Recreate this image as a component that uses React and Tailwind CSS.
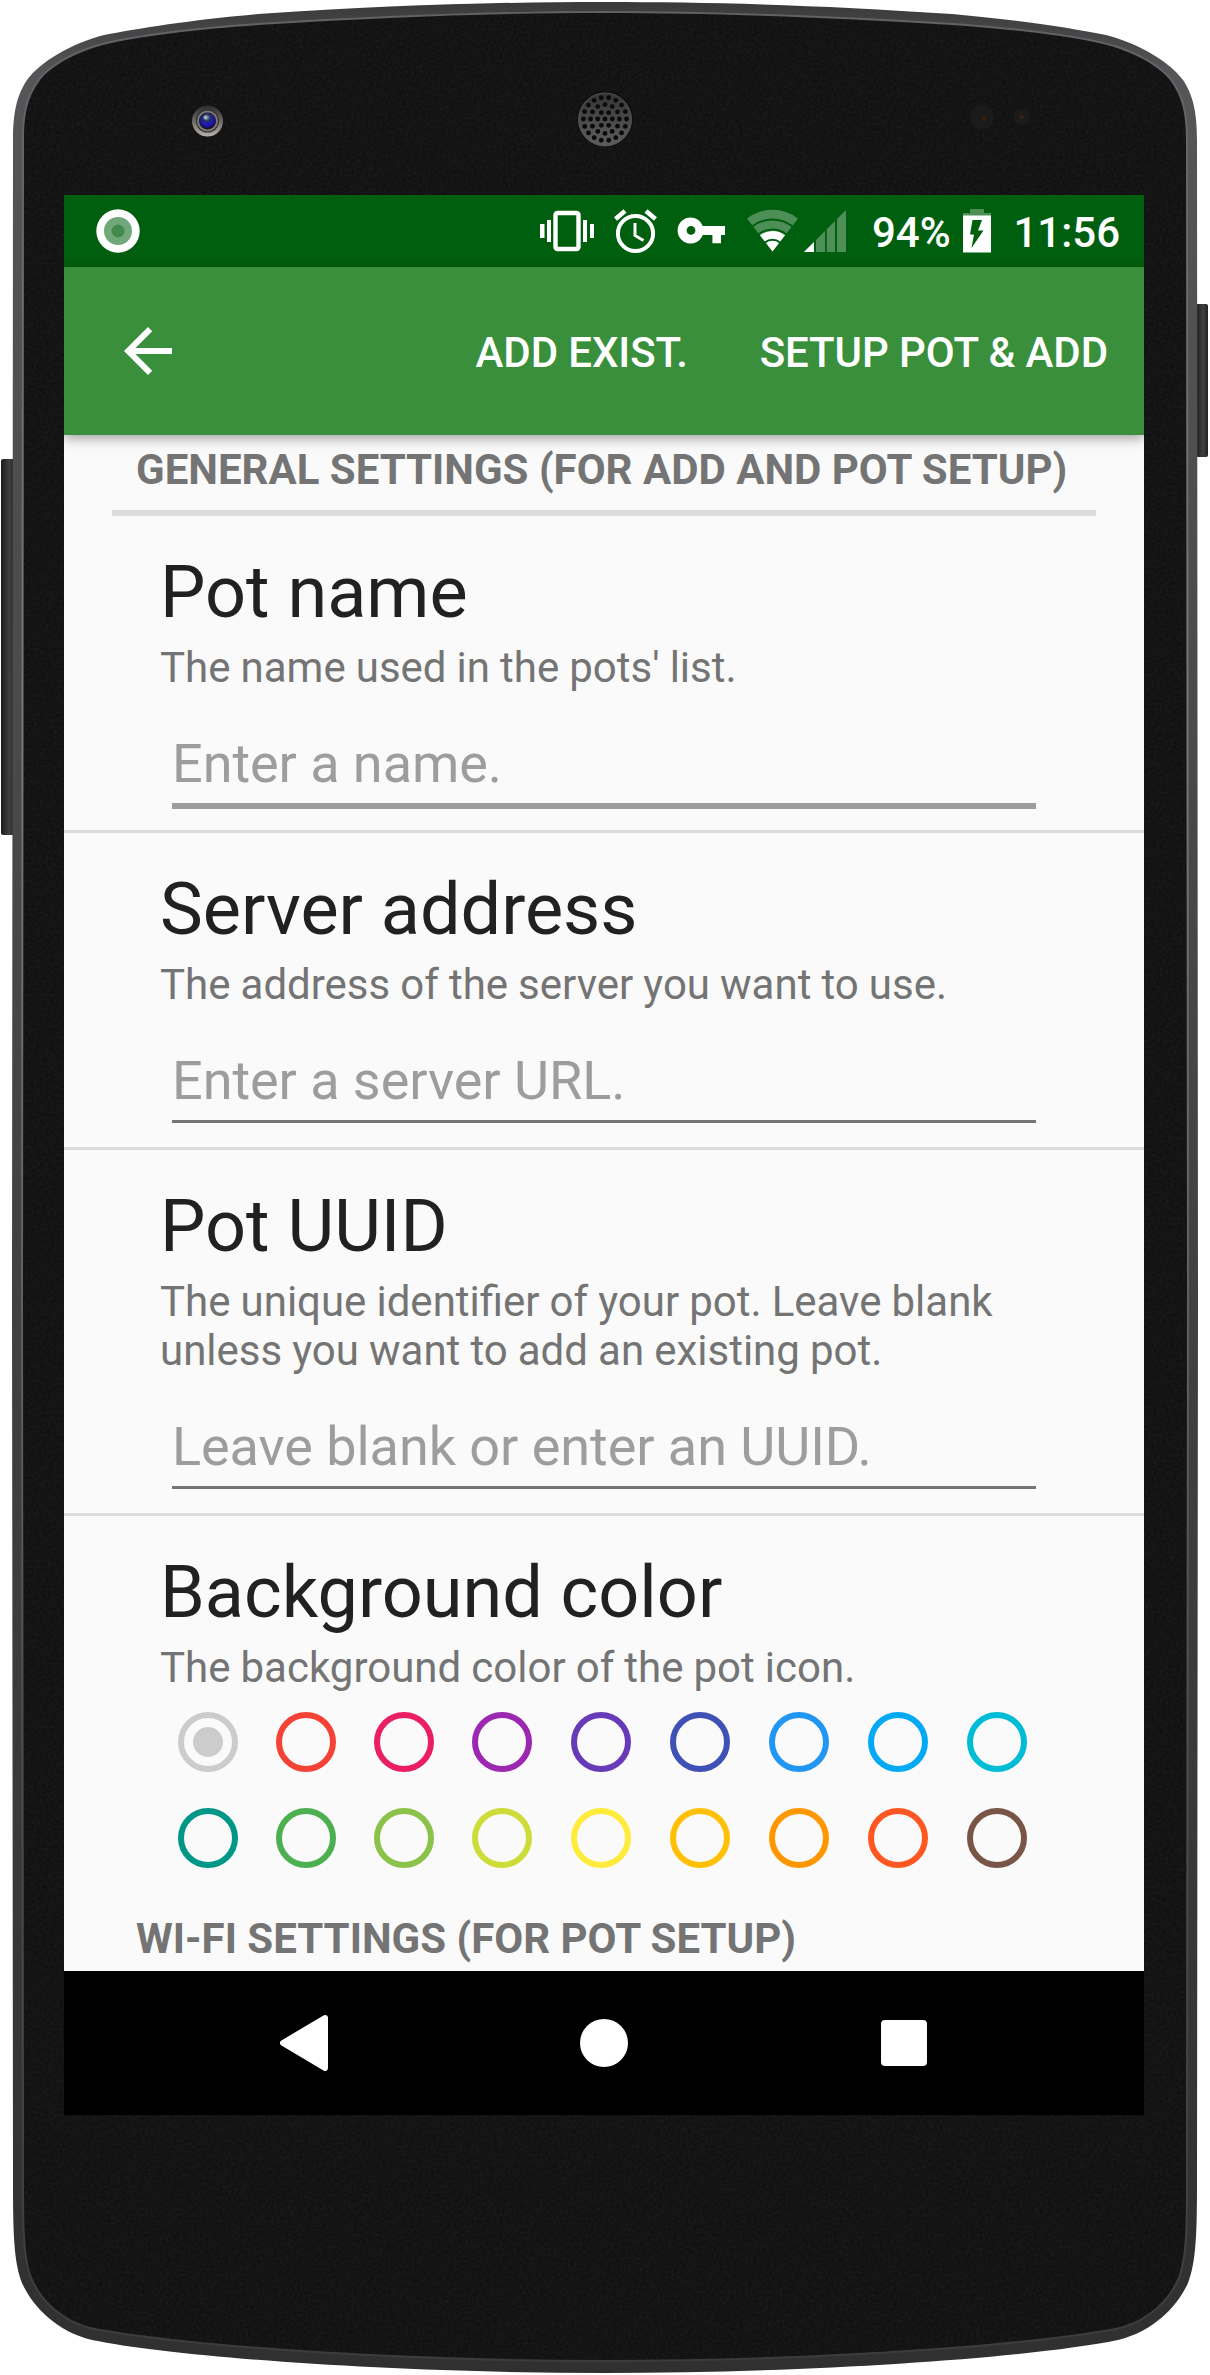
import React from "react";

const OUTER =
  "M605 2 C500 2 390 5 258 14 C190 20 140 28 104 35 C70 44 40 62 27 80 C17 95 13 112 13 140 L12 1300 L13 2180 C13 2235 14 2262 22 2283 C32 2305 55 2331 92 2340 C180 2358 400 2373 605 2373 C810 2373 1030 2358 1118 2340 C1155 2331 1178 2305 1188 2283 C1196 2262 1197 2235 1197 2180 L1198 1300 L1197 140 C1197 112 1193 95 1183 80 C1170 62 1140 44 1106 35 C1070 28 1020 20 952 14 C820 5 710 2 605 2 Z";
const INNER =
  "M605 13 C500 13 390 17 258 25 C200 29 150 35 116 42 C80 49 52 65 40 80 C28 97 24 112 24 140 L23 1300 L24 2180 C24 2235 25 2255 31 2275 C39 2296 58 2318 90 2327 C180 2345 400 2360 605 2360 C810 2360 1030 2345 1120 2327 C1152 2318 1171 2296 1179 2275 C1185 2255 1186 2235 1186 2180 L1187 1300 L1186 140 C1186 112 1182 97 1170 80 C1158 65 1130 49 1094 42 C1060 35 1010 29 952 25 C820 17 710 13 605 13 Z";

const SPEAKER_HOLES = [
  { r: 0, n: 1 },
  { r: 7.3, n: 6 },
  { r: 14.4, n: 12 },
  { r: 21.6, n: 18 },
].flatMap(({ r, n }) =>
  Array.from({ length: n }, (_, i) => {
    const a = (i / n) * Math.PI * 2;
    return [605 + r * Math.cos(a), 119 + r * Math.sin(a)];
  })
);

function PhoneFrame() {
  return (
    <svg
      className="absolute inset-0 h-[2375px] w-[1210px]"
      viewBox="0 0 1210 2375"
      aria-hidden="true"
    >
      <defs>
        <linearGradient id="rim" x1="0" y1="0" x2="0" y2="1">
          <stop offset="0" stopColor="#3a3a3b" />
          <stop offset="0.03" stopColor="#565658" />
          <stop offset="0.25" stopColor="#4c4c4e" />
          <stop offset="0.7" stopColor="#3b3b3c" />
          <stop offset="1" stopColor="#303030" />
        </linearGradient>
        <linearGradient id="edge" x1="0" y1="0" x2="0" y2="1">
          <stop offset="0" stopColor="#626266" />
          <stop offset="0.3" stopColor="#77777c" />
          <stop offset="0.7" stopColor="#525254" />
          <stop offset="1" stopColor="#3c3c3d" />
        </linearGradient>
        <linearGradient id="key" x1="0" y1="0" x2="1" y2="0">
          <stop offset="0" stopColor="#1c1c1c" />
          <stop offset="0.6" stopColor="#404040" />
          <stop offset="1" stopColor="#202020" />
        </linearGradient>
        <linearGradient id="lensRing" x1="0" y1="0" x2="0" y2="1">
          <stop offset="0" stopColor="#2c2c2c" />
          <stop offset="0.5" stopColor="#6a6866" />
          <stop offset="1" stopColor="#b5b2b0" />
        </linearGradient>
        <radialGradient id="lens" cx="0.45" cy="0.3" r="0.7">
          <stop offset="0" stopColor="#8ea0b8" />
          <stop offset="0.35" stopColor="#27305e" />
          <stop offset="0.75" stopColor="#1a12c8" />
          <stop offset="1" stopColor="#15105a" />
        </radialGradient>
        <linearGradient id="grille" x1="0" y1="0" x2="0" y2="1">
          <stop offset="0" stopColor="#343434" />
          <stop offset="1" stopColor="#5e5e5e" />
        </linearGradient>
        <filter id="grain" x="0" y="0" width="100%" height="100%" colorInterpolationFilters="sRGB">
          <feTurbulence type="fractalNoise" baseFrequency="0.35" numOctaves="2" result="n" />
          <feColorMatrix
            in="n"
            type="matrix"
            values="0.06 0 0 0 0.05  0.06 0 0 0 0.05  0.06 0 0 0 0.05  0 0 0 0 1"
          />
          <feComposite in2="SourceGraphic" operator="in" />
        </filter>
      </defs>
      <rect x="1196" y="304" width="12" height="153" rx="2" fill="url(#key)" />
      <rect x="1" y="459" width="14" height="376" rx="2" fill="url(#key)" />
      <path d={OUTER} fill="url(#rim)" />
      <path d={INNER} fill="#141414" stroke="url(#edge)" strokeWidth="4" />
      <path d={INNER} fill="#141414" filter="url(#grain)" />

      <circle cx="207.5" cy="121" r="15.5" fill="url(#lensRing)" />
      <circle cx="207.5" cy="121" r="11.5" fill="#2a2a2a" />
      <circle cx="207.5" cy="121" r="10.5" fill="#7d7977" />
      <circle cx="207.5" cy="121" r="8.5" fill="#171717" />
      <circle cx="207.5" cy="120.5" r="7.5" fill="url(#lens)" />
      <circle cx="205.5" cy="117.5" r="2" fill="#9fb0b8" />

      <circle cx="605" cy="119" r="28" fill="#0c0c0c" />
      <circle cx="605" cy="119.5" r="26.5" fill="url(#grille)" stroke="#555" strokeWidth="1" />
      {SPEAKER_HOLES.map(([x, y], i) => (
        <circle key={i} cx={x} cy={y} r="2.4" fill="#0a0a0a" />
      ))}

      <circle cx="982" cy="117" r="12" fill="#1c1b1b" />
      <circle cx="984" cy="119" r="2.2" fill="#3a2115" />
      <circle cx="1021.5" cy="117" r="8" fill="#1c1b1b" />
      <circle cx="1021.5" cy="117" r="2.2" fill="#3a2115" />
    </svg>
  );
}

function StatusBar() {
  return (
    <div className="flex h-[72px] items-center bg-[#005f0e] pl-8 pr-6 text-[42px] font-medium leading-[72px] text-white">
      <svg className="size-[44px]" viewBox="0 0 44 44">
        <circle cx="22" cy="22" r="21.7" fill="#fff" />
        <circle cx="22" cy="22" r="14" fill="#71a87a" />
        <circle cx="22" cy="22" r="6.5" fill="#42894c" />
      </svg>
      <svg className="ml-[400px] h-[72px] w-[316px]" viewBox="540 195 316 72" fill="#fff">
        <rect x="555.5" y="213" width="23" height="36" rx="2" fill="none" stroke="#fff" strokeWidth="4.4" />
        <path d="M540 224h4.500v14h-4.500zM547 220h4v22h-4zM583 220h4v22h-4zM590 224h4v14h-4z" />
        <g fill="none" stroke="#fff">
          <circle cx="635.500" cy="233.500" r="17.600" strokeWidth="4" />
          <path d="M635 223v12.500l8.500 5" strokeWidth="3" />
          <path d="M615.500 219l9.500-8M655.500 219l-9.500-8" strokeWidth="4.600" />
        </g>
        <path
          fillRule="evenodd"
          d="M690.500 217.500a13 13 0 0 1 12.300 8.500H725v9h-4v8.300h-8.600V235h-9.600a13 13 0 1 1-12.300-17.500zM691 226a4.400 4.400 0 1 0 0 8.800a4.400 4.400 0 0 0 0-8.800z"
        />
        <path d="M747 218.500a42 42 0 0 1 51 0L772.500 251.500z" fill="#4d8f57" />
        <path d="M760 235.200a20.500 20.500 0 0 1 25 0L772.500 251.500z" />
        <g fill="none" stroke="#005f0e" strokeWidth="2">
          <path d="M752.500 226.300a32.500 32.500 0 0 1 40 0" />
          <path d="M758.800 234.300a22 22 0 0 1 27.400 0" />
          <path d="M765 242.500a12 12 0 0 1 15 0" />
        </g>
        <path d="M804 252l42-42v42z" fill="#4d8f57" />
        <path d="M804 252l10-10v10z" />
        <path d="M814 205h2v50h-2zM825 205h1.800v50h-1.800zM835 205h2v50h-2z" fill="#005f0e" />
      </svg>
      <span className="ml-[16px] w-[79px] pt-[3px]">94%</span>
      <svg className="ml-[12px] h-[72px] w-[28px]" viewBox="963 195 28 72">
        <path d="M970 209h14v4h7v3h-28v-3h7z" fill="#4d8f57" />
        <path d="M963 215.500h28v37h-28z" fill="#fff" />
        <path d="M972.500 220h9.500l-4 10.500h5.500L971.500 248l2.500-13.500h-4z" fill="#005f0e" />
      </svg>
      <span className="ml-auto pt-[3px]">11:56</span>
    </div>
  );
}

function AppBar() {
  return (
    <div className="relative z-10 flex h-[168px] items-center bg-[#3a8f3d] pl-[60px] pr-9 text-[42px] font-medium tracking-[-0.1px] text-white shadow-[0_3px_12px_rgba(0,0,0,0.38)]">
      <svg className="size-12" viewBox="4 4 16 16" fill="#fff">
        <path d="M20 11H7.830l5.590-5.590L12 4l-8 8 8 8 1.410-1.410L7.830 13H20v-2z" />
      </svg>
      <span className="ml-auto pt-[2px]">ADD EXIST.</span>
      <span className="ml-[72px] pt-[2px]">SETUP POT &amp; ADD</span>
    </div>
  );
}

function Title({ children }) {
  return <h2 className="text-[72px] leading-[84px] text-[#212121]">{children}</h2>;
}

function Summary({ children }) {
  return (
    <p className="mt-2 text-[42px] leading-[49px] [word-spacing:-0.35px] text-[#747474]">{children}</p>
  );
}

function TextSetting({ title, summary, hint, focused }) {
  return (
    <section className="border-b-[3px] border-[#dcdcdc] pb-[21px] pl-24 pr-[108px] pt-[35px]">
      <Title>{title}</Title>
      <Summary>{summary}</Summary>
      <div className="ml-3 mt-10 flex h-[77px] flex-col">
        <div className="h-[71px] text-[54px] leading-[63px] tracking-[-0.05px] text-[#9d9d9d]">{hint}</div>
        <div className={focused ? "h-[6px] bg-[#9d9d9d]" : "h-[3px] bg-[#757575]"} />
      </div>
    </section>
  );
}

const COLORS = [
  ["#cccccc", "#f44336", "#e91e63", "#9c27b0", "#673ab7", "#3f51b5", "#2196f3", "#03a9f4", "#00bcd4"],
  ["#009688", "#4caf50", "#8bc34a", "#cddc39", "#ffeb3b", "#ffc107", "#ff9800", "#ff5722", "#795548"],
];

function ColorRow({ colors, checked }) {
  return (
    <div className="flex">
      {colors.map((c, i) => (
        <div
          key={c}
          className={`flex size-[60px] items-center justify-center rounded-full border-[6px] ${
            i < 3 ? "mr-[38px]" : "mr-[39px]"
          }`}
          style={{ borderColor: c }}
        >
          {i === checked && <div className="size-[30px] rounded-full" style={{ backgroundColor: c }} />}
        </div>
      ))}
    </div>
  );
}

function NavBar() {
  return (
    <div className="flex h-36 items-center bg-black pl-[216px] pr-[217px]">
      <svg className="h-[56px] w-[48px]" viewBox="0 0 48 56">
        <path d="M45 3L3 28l42 25z" fill="#fff" stroke="#fff" strokeWidth="6" strokeLinejoin="round" />
      </svg>
      <div className="ml-[252px] size-12 rounded-full bg-white" />
      <div className="ml-auto size-[46px] rounded-[4px] bg-white" />
    </div>
  );
}

export default function App() {
  return (
    <main className="relative h-[2375px] w-[1210px] overflow-hidden bg-white pl-16 pt-[195px] font-['Roboto',sans-serif]">
      <PhoneFrame />
      <div className="relative flex h-[1920px] w-[1080px] flex-col overflow-hidden bg-[#fafafa]">
        <StatusBar />
        <AppBar />
        <div className="flex-1 overflow-hidden">
          <div className="mx-12 border-b-[6px] border-[#dcdcdc] pb-4 pl-6 pt-[10px] text-[42px] font-bold leading-[49px] text-[#747474] whitespace-nowrap">
            GENERAL SETTINGS (FOR ADD AND POT SETUP)
          </div>
          <TextSetting title="Pot name" summary="The name used in the pots' list." hint="Enter a name." focused />
          <TextSetting
            title="Server address"
            summary="The address of the server you want to use."
            hint="Enter a server URL."
          />
          <TextSetting
            title="Pot UUID"
            summary={
              <>
                The unique identifier of your pot. Leave blank
                <br />
                unless you want to add an existing pot.
              </>
            }
            hint="Leave blank or enter an UUID."
          />
          <section className="pl-24 pt-[35px]">
            <Title>Background color</Title>
            <Summary>The background color of the pot icon.</Summary>
            <div className="ml-[18px] mt-5 flex flex-col gap-9">
              <ColorRow colors={COLORS[0]} checked={0} />
              <ColorRow colors={COLORS[1]} />
            </div>
          </section>
          <div className="mt-[46px] pl-[72px] text-[42px] font-bold leading-[49px] text-[#747474]">
            WI-FI SETTINGS (FOR POT SETUP)
          </div>
        </div>
        <NavBar />
      </div>
    </main>
  );
}
